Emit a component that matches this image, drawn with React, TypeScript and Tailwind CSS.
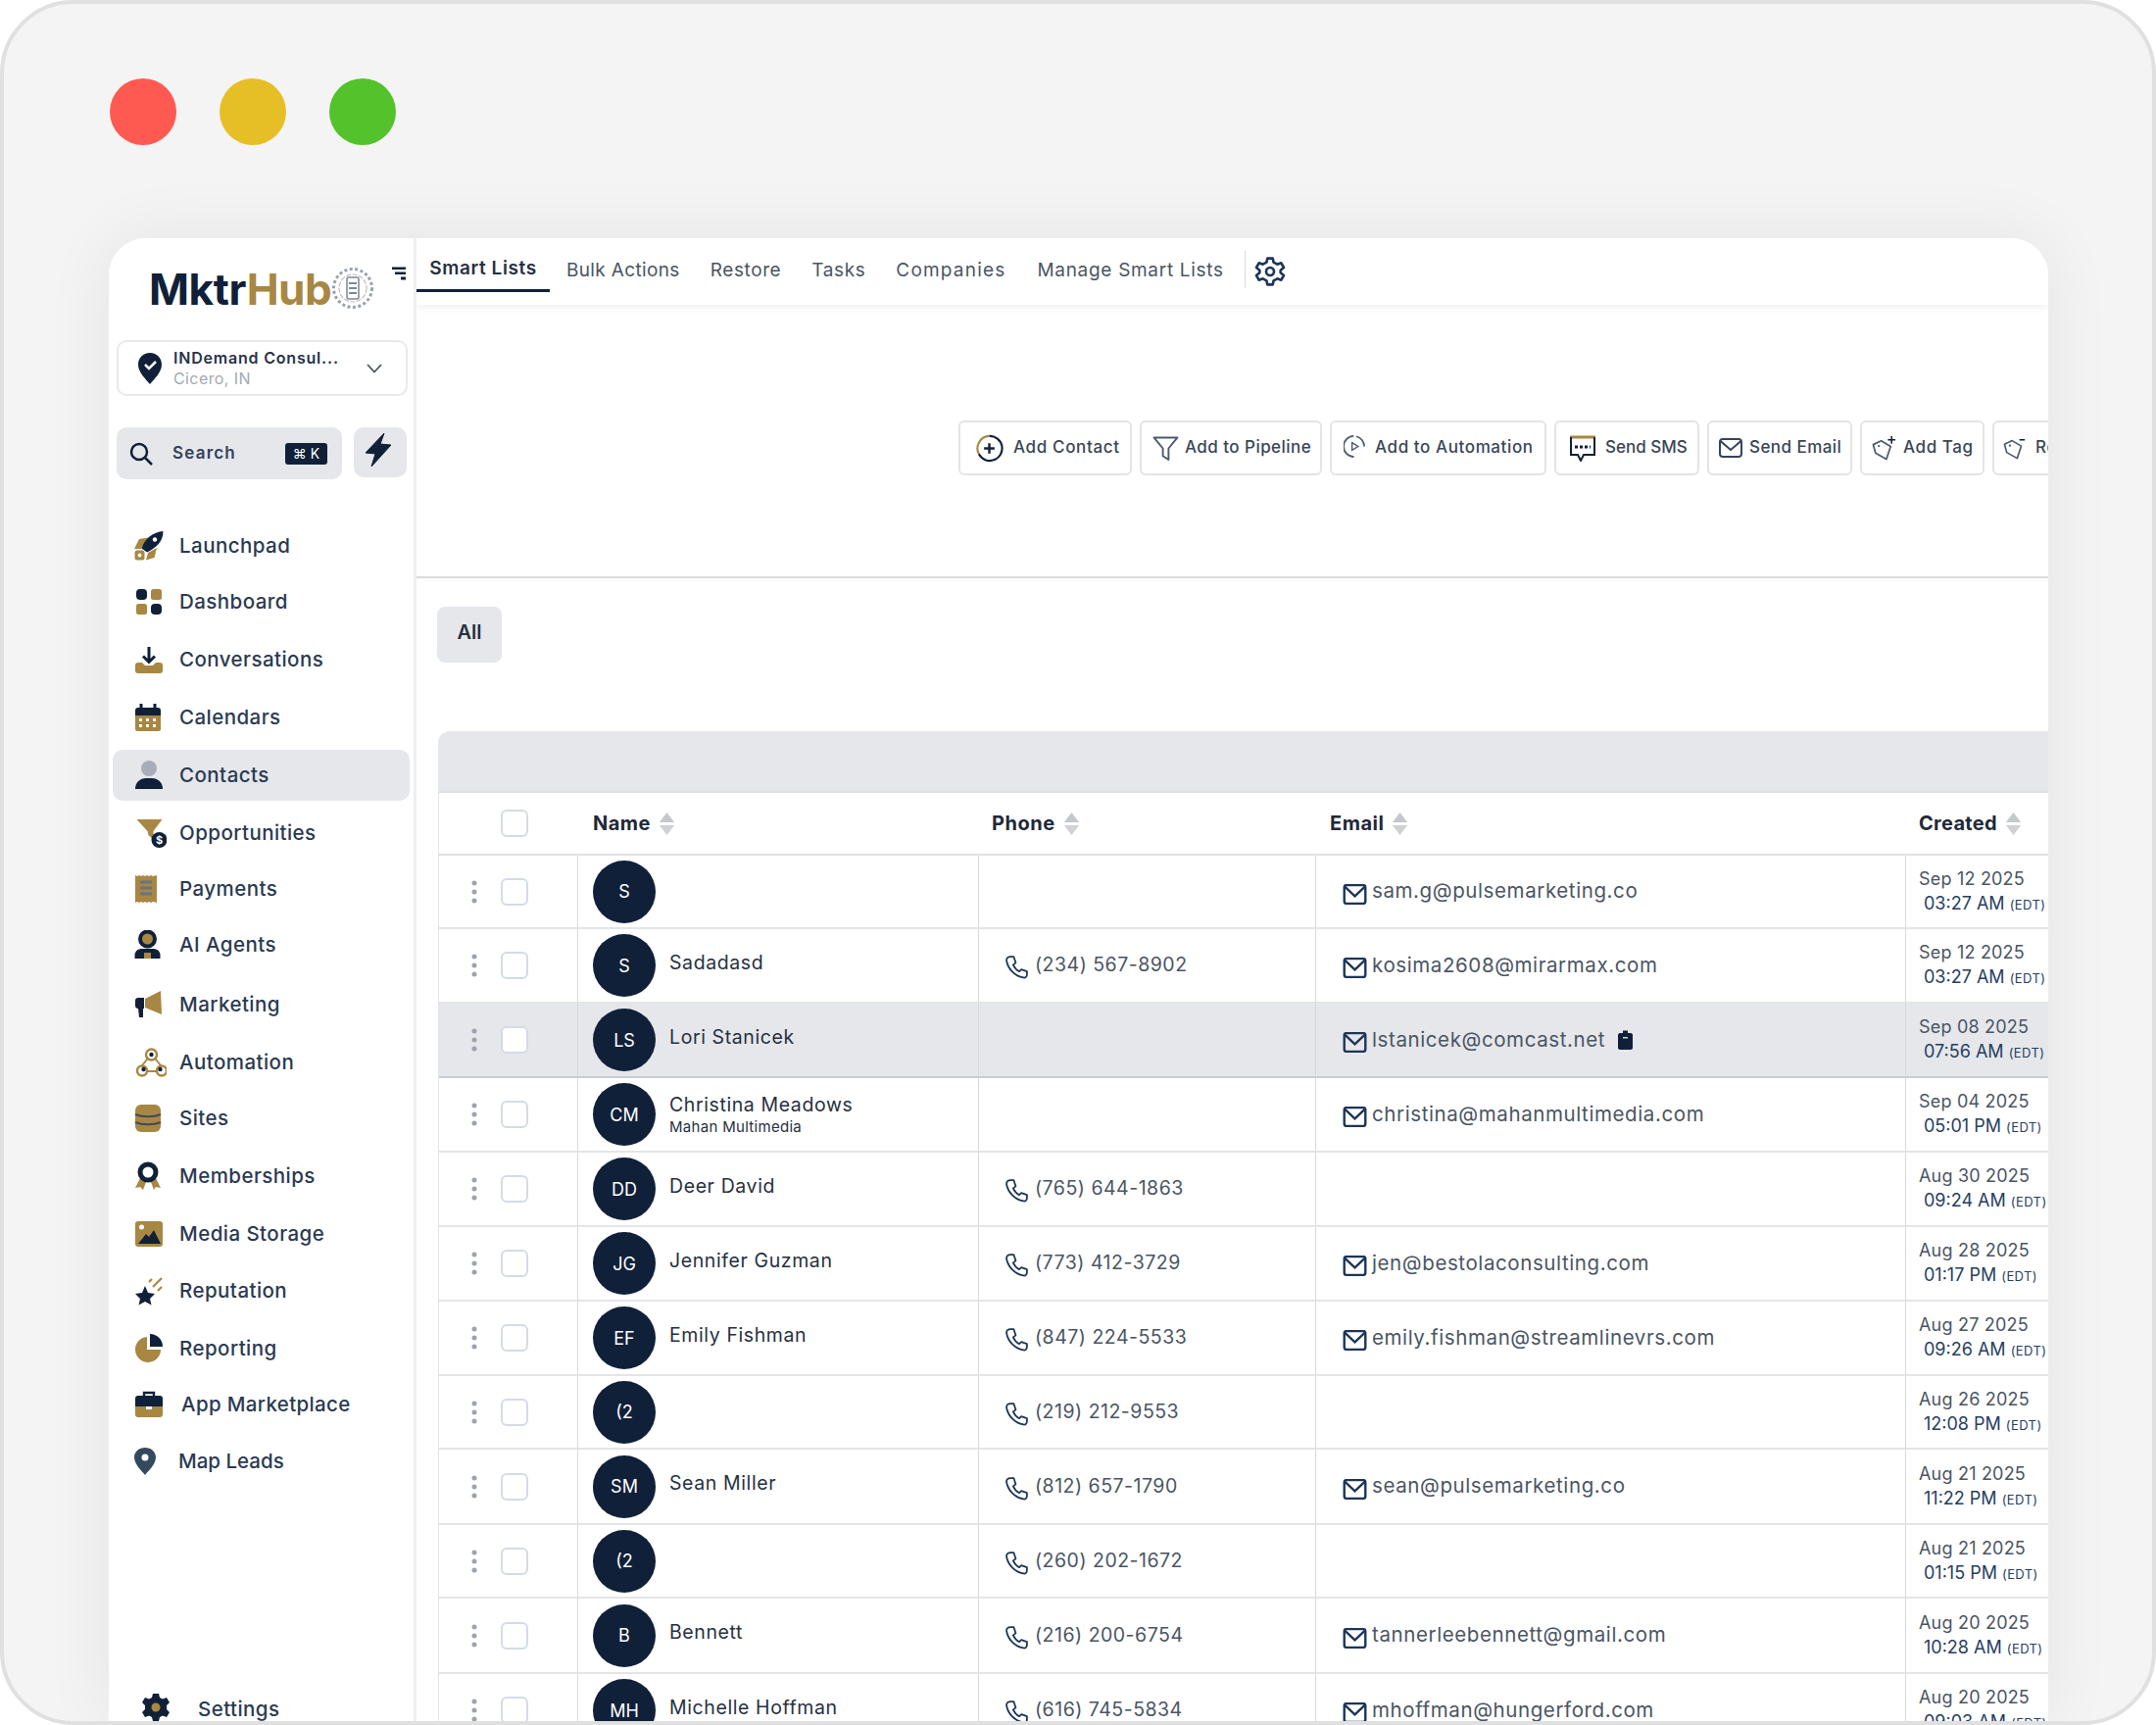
import { ReactNode } from 'react';

const NAVY = '#102039';
const GOLD = '#a88743';

function Svg({ children, className = 'w-[30px] h-[30px]' }: { children: ReactNode; className?: string }) {
  return (
    <svg viewBox="0 0 30 30" fill="none" className={`${className} shrink-0`}>
      {children}
    </svg>
  );
}

// sidebar icons, two tone
const icons: Record<string, ReactNode> = {
  rocket: (
    <Svg>
      <path d="M0 18 L5 8 L14 6.500 L7 18Z" fill={GOLD} />
      <path d="M14 22 L23 17 L20.500 27 L12 29.500Z" fill={GOLD} />
      <rect x="0.500" y="19.500" width="10" height="10" rx="2.500" fill={GOLD} />
      <circle cx="5.500" cy="24.500" r="1.900" fill="#fff" />
      <path d="M7.500 17.500 C11 7 19 1 29.500 0 C29.500 9.500 23.500 16.500 13 21.500Z" fill={NAVY} />
      <circle cx="21" cy="8.500" r="2.200" fill="#fff" />
    </Svg>
  ),
  dashboard: (
    <Svg>
      <rect x="2" y="2" width="11" height="11" rx="4" fill={NAVY} />
      <rect x="17" y="2" width="11" height="11" rx="2.500" fill={GOLD} />
      <rect x="2" y="17" width="11" height="11" rx="2.500" fill={GOLD} />
      <rect x="17" y="17" width="11" height="11" rx="4" fill={NAVY} />
    </Svg>
  ),
  inbox: (
    <Svg>
      <path d="M1 21 C1 19 2 18 4 18 L8 18 L11 21 L19 21 L22 18 L26 18 C28 18 29 19 29 21 L29 26 C29 28 28 29 26 29 L4 29 C2 29 1 28 1 26Z" fill={GOLD} />
      <path d="M15 2 L15 17 M9 11.500 L15 17.500 L21 11.500" stroke={NAVY} strokeWidth="3" />
    </Svg>
  ),
  calendar: (
    <Svg>
      <rect x="1" y="8" width="26" height="21" rx="2" fill={GOLD} />
      <path d="M1 13 L1 8 C1 6 2 5 4 5 L24 5 C26 5 27 6 27 8 L27 13Z" fill={NAVY} />
      <path d="M7 1 L7 7 M21 1 L21 7" stroke={NAVY} strokeWidth="3" />
      <g fill="#fff">
        <rect x="5" y="16" width="3" height="3" />
        <rect x="12" y="16" width="3" height="3" />
        <rect x="19" y="16" width="3" height="3" />
        <rect x="5" y="22" width="3" height="3" />
        <rect x="12" y="22" width="3" height="3" />
        <rect x="19" y="22" width="3" height="3" />
      </g>
    </Svg>
  ),
  person: (
    <Svg>
      <circle cx="15" cy="8" r="8" fill="#a8aeb9" />
      <path d="M1 29 C1 22 6 18 12 18 L18 18 C24 18 29 22 29 29Z" fill={NAVY} />
    </Svg>
  ),
  funnel: (
    <Svg className="w-[33px] h-[30px]">
      <path d="M1 1 L27 1 L18 13 L18 22 L13 17 L12 13Z" fill={GOLD} />
      <circle cx="24" cy="22" r="8" fill={NAVY} />
      <text x="24" y="26" textAnchor="middle" fontSize="11" fontWeight="700" fill="#fff">$</text>
    </Svg>
  ),
  receipt: (
    <Svg>
      <path d="M1 1 L3 2 L5 1 L7 2 L9 1 L11 2 L13 1 L15 2 L17 1 L19 2 L23 1 L23 29 L19 28 L17 29 L15 28 L13 29 L11 28 L9 29 L7 28 L5 29 L3 28 L1 29Z" fill={GOLD} />
      <path d="M6 8 L18 8 M6 14 L18 14 M6 20 L18 20" stroke="#6b7280" strokeWidth="3.200" />
    </Svg>
  ),
  agent: (
    <Svg>
      <circle cx="13.500" cy="9" r="7.500" stroke={NAVY} strokeWidth="4" fill={GOLD} />
      <path d="M0.500 29 L0.500 25 C1 21 4 19 8 19 L19 19 C23 19 26 21 26.500 25 L26.500 29Z" fill={NAVY} />
      <rect x="10" y="23" width="7" height="6" fill={GOLD} />
    </Svg>
  ),
  megaphone: (
    <Svg>
      <path d="M11 9 L27 1 L28 25 L11 18Z" fill={GOLD} />
      <path d="M1 11 C1 9 2 8 4 8 L10 8 L10 19 L9 19 L9 28 L5 28 L4 19 C2 19 1 18 1 16Z" fill={NAVY} />
    </Svg>
  ),
  automation: (
    <Svg className="w-[33px] h-[30px]">
      <path d="M13 10 L5 20 M19 10 L27 20 M9 24 L23 24" stroke={GOLD} strokeWidth="2" />
      <circle cx="16" cy="7" r="5.500" stroke={GOLD} strokeWidth="2.400" fill="#fff" />
      <circle cx="6.500" cy="23.500" r="5" stroke={GOLD} strokeWidth="2.400" fill="#fff" />
      <circle cx="26.500" cy="23.500" r="5" stroke={GOLD} strokeWidth="2.400" fill="#fff" />
      <circle cx="16" cy="7" r="2.200" fill={NAVY} />
      <circle cx="8" cy="22" r="2.200" fill={NAVY} />
      <circle cx="25" cy="22" r="2.200" fill={NAVY} />
    </Svg>
  ),
  database: (
    <Svg>
      <rect x="1" y="1" width="26" height="28" rx="6" fill={GOLD} />
      <path d="M1 11 C8 14 20 14 27 11 M1 19 C8 22 20 22 27 19" stroke="#3f4a5c" strokeWidth="2" />
    </Svg>
  ),
  badge: (
    <Svg>
      <path d="M6 17 L1 27 L6 26 L9 29 L12 21Z M17 21 L20 29 L22 26 L27 27 L22 17Z" fill={GOLD} />
      <circle cx="14" cy="11" r="8" stroke={NAVY} strokeWidth="5" fill="#fff" />
    </Svg>
  ),
  media: (
    <Svg>
      <rect x="1" y="2" width="28" height="26" rx="3" fill={GOLD} />
      <circle cx="7.500" cy="8" r="2.500" fill="#fff" />
      <path d="M4 25 L12 15 L15 18 L20 11 L27 25Z" fill={NAVY} />
    </Svg>
  ),
  star: (
    <Svg>
      <path d="M11 10 L14 17 L21 18 L16 23 L17.500 29.500 L11 26 L4.500 29.500 L6 23 L1 18 L8 17Z" fill={NAVY} />
      <path d="M19 11 L28 2 M15 6 L18 3 M24 15 L28 11" stroke={GOLD} strokeWidth="2.200" />
    </Svg>
  ),
  pie: (
    <Svg>
      <path d="M13 3 A13 13 0 1 0 27 16 L13 16Z" fill={GOLD} />
      <path d="M16 0 A13 13 0 0 1 29 13 L16 13Z" fill={NAVY} />
    </Svg>
  ),
  briefcase: (
    <Svg>
      <path d="M10 7 L10 3 L20 3 L20 7" stroke={NAVY} strokeWidth="2.400" />
      <path d="M1 9 C1 7 2 6 4 6 L26 6 C28 6 29 7 29 9 L29 17 L1 17Z" fill={NAVY} />
      <path d="M1 17 L12 17 L12 20 L18 20 L18 17 L29 17 L29 25 C29 27 28 28 26 28 L4 28 C2 28 1 27 1 25Z" fill={GOLD} />
    </Svg>
  ),
  mapPin: (
    <Svg>
      <path d="M11 1 C17 1 22 5 22 11 C22 18 14 25 11 29 C8 25 0 18 0 11 C0 5 5 1 11 1Z" fill="#34495e" />
      <circle cx="11" cy="11" r="3.500" fill="#fff" />
    </Svg>
  ),
};

const navItems = [
  { label: 'Launchpad', icon: 'rocket', cls: 'mt-[42px]' },
  { label: 'Dashboard', icon: 'dashboard', cls: 'mt-[5px]' },
  { label: 'Conversations', icon: 'inbox', cls: 'mt-[7px]' },
  { label: 'Calendars', icon: 'calendar', cls: 'mt-[7px]' },
  { label: 'Contacts', icon: 'person', cls: 'mt-[7px] bg-[#e5e7eb] rounded-[10px]' },
  { label: 'Opportunities', icon: 'funnel', cls: 'mt-[7px]' },
  { label: 'Payments', icon: 'receipt', cls: 'mt-[5px]' },
  { label: 'AI Agents', icon: 'agent', cls: 'mt-[5px]' },
  { label: 'Marketing', icon: 'megaphone', cls: 'mt-[9px]' },
  { label: 'Automation', icon: 'automation', cls: 'mt-[7px]' },
  { label: 'Sites', icon: 'database', cls: 'mt-[5px]' },
  { label: 'Memberships', icon: 'badge', cls: 'mt-[7px]' },
  { label: 'Media Storage', icon: 'media', cls: 'mt-[7px]' },
  { label: 'Reputation', icon: 'star', cls: 'mt-[6px]' },
  { label: 'Reporting', icon: 'pie', cls: 'mt-[7px]' },
  { label: 'App Marketplace', icon: 'briefcase', cls: 'mt-[5px]', text: 'ml-[2px] tracking-[0.35px]' },
  { label: 'Map Leads', icon: 'mapPin', cls: 'mt-[6px]', text: '-ml-[1px] tracking-[0px]' },
];

function Logo() {
  return (
    <div className="flex pl-[41px] pt-[30px] h-[104px] items-start relative">
      <div className="text-[44px] leading-[44px] font-bold tracking-[-0.4px] w-[186px] whitespace-nowrap">
        <span className="text-[#102039]">Mktr</span>
        <span className="text-[#a88743]">Hub</span>
      </div>
      <svg viewBox="0 0 44 44" fill="none" className="w-[44px] h-[44px] shrink-0 -mt-[1px]">
        <circle cx="22" cy="22" r="19.500" stroke="#9aa1ac" strokeWidth="3" strokeDasharray="3 2.500" />
        <circle cx="22" cy="22" r="14" stroke="#b9bec6" strokeWidth="1.200" strokeDasharray="5 1.500" />
        <rect x="16" y="11" width="12" height="22" rx="2" stroke="#7e8794" strokeWidth="1.500" />
        <path d="M18 17 L26 17 M18 22 L26 22 M18 27 L26 27" stroke="#7e8794" strokeWidth="2" />
      </svg>
      <svg viewBox="0 0 14 14" className="absolute left-[289px] top-[29px] w-[14px] h-[14px]">
        <path d="M0 0.500 L14 0.500 L14 3 L0 3Z M3 5.500 L14 5.500 L14 8 L3 8Z M9 10.500 L14 10.500 L14 13.500 L9 13.500Z" fill={NAVY} />
      </svg>
    </div>
  );
}

function Sidebar() {
  return (
    <aside className="w-[314px] shrink-0 flex flex-col border-r-[3px] border-[#efefef] bg-white">
      <Logo />
      <div className="mx-[8px] w-[297px] h-[57px] border-2 border-[#e8e9eb] rounded-[10px] flex items-center pl-[20px]">
        <svg viewBox="0 0 24 32" className="w-[24px] h-[32px] shrink-0">
          <path d="M12 0 C19 0 24 5 24 12 C24 20 16 27 12 32 C8 27 0 20 0 12 C0 5 5 0 12 0Z" fill={NAVY} />
          <path d="M7 12 L11 16 L18 9" stroke="#fff" strokeWidth="2.500" fill="none" />
        </svg>
        <div className="ml-[12px] w-[185px] leading-[21px]">
          <div className="text-[16px] font-semibold text-[#27334a] tracking-[0.8px] whitespace-nowrap">INDemand Consul...</div>
          <div className="text-[16px] text-[#a4a9b2] tracking-[0.4px]">Cicero, IN</div>
        </div>
        <svg viewBox="0 0 16 10" className="w-[16px] h-[10px] ml-[12px]" fill="none">
          <path d="M1 1 L8 8.500 L15 1" stroke="#4b5563" strokeWidth="1.800" />
        </svg>
      </div>
      <div className="mt-[32px] ml-[8px] flex gap-[12px] h-[53px]">
        <div className="w-[230px] bg-[#e5e7eb] rounded-[10px] flex items-center pl-[13px]">
          <svg viewBox="0 0 24 24" className="w-[24px] h-[24px] shrink-0" fill="none">
            <circle cx="10" cy="10" r="8" stroke={NAVY} strokeWidth="2.500" />
            <path d="M16 16 L23 23" stroke={NAVY} strokeWidth="2.500" />
          </svg>
          <span className="ml-[20px] w-[65px] text-[17px] font-semibold text-[#33415a] tracking-[1.2px]">Search</span>
          <span className="ml-[50px] w-[43px] h-[22px] bg-[#102039] rounded-[3px] text-white text-[14px] leading-[22px] text-center">⌘ K</span>
        </div>
        <div className="w-[54px] h-[51px] bg-[#e5e7eb] rounded-[10px] flex items-center justify-center pr-[4px] pb-[5px]">
          <svg viewBox="0 0 26 34" className="w-[26px] h-[34px]">
            <path d="M19 0 L0 20 L10 21 L6 34 L26 12 L15 11Z" fill={NAVY} stroke={NAVY} strokeLinejoin="round" />
          </svg>
        </div>
      </div>
      <nav className="flex flex-col ml-[4px] w-[303px]">
        {navItems.map((item) => (
          <a key={item.label} className={`h-[52px] flex items-center pl-[22px] ${item.cls}`}>
            <span className="w-[46px] shrink-0 flex items-center">{icons[item.icon]}</span>
            <span className={`pt-[1px] text-[20.500px] font-medium text-[#2b3a52] whitespace-nowrap ${item.text ?? 'tracking-[0.45px]'}`}>{item.label}</span>
          </a>
        ))}
      </nav>
      <div className="mt-auto flex items-center ml-[34px] h-[28px]">
        <svg viewBox="0 0 28 28" className="w-[28px] h-[28px] shrink-0">
          <path
            d="M11 0 L17 0 L18 4 L21 5.500 L25 4 L28 9 L25 12 L25 16 L28 19 L25 24 L21 22.500 L18 24 L17 28 L11 28 L10 24 L7 22.500 L3 24 L0 19 L3 16 L3 12 L0 9 L3 4 L7 5.500 L10 4Z"
            fill={NAVY}
          />
          <circle cx="14" cy="14" r="4.500" fill={GOLD} />
        </svg>
        <span className="ml-[29px] pt-[4px] text-[20.500px] font-medium text-[#2b3a52] tracking-[0.45px]">Settings</span>
      </div>
    </aside>
  );
}

const tabs = [
  { label: 'Bulk Actions', cls: 'ml-[17px] tracking-[0.35px]' },
  { label: 'Restore', cls: 'ml-[31px] tracking-[0.6px]' },
  { label: 'Tasks', cls: 'ml-[31px] tracking-[0.6px]' },
  { label: 'Companies', cls: 'ml-[31px] tracking-[1.2px]' },
  { label: 'Manage Smart Lists', cls: 'ml-[32px] tracking-[0.7px]' },
];

function TopBar() {
  return (
    <div className="h-[68px] shrink-0 flex items-start bg-white relative shadow-[0_3px_8px_rgba(0,0,0,0.06)]">
      <div className="w-[136px] h-[55px] border-b-[3px] border-[#102039] flex items-center justify-center pt-[11px] text-[19px] font-semibold text-[#27303f] tracking-[0.6px]">
        Smart Lists
      </div>
      {tabs.map((t) => (
        <div key={t.label} className={`h-[55px] flex items-center pt-[11px] text-[19px] text-[#4b5563] whitespace-nowrap ${t.cls}`}>
          {t.label}
        </div>
      ))}
      <div className="ml-[21px] mt-[13px] w-px h-[38px] bg-[#d9d9d9]" />
      <svg viewBox="0 0 24 24" fill="none" stroke="#1d3557" strokeWidth="2" className="ml-[9px] mt-[18px] w-[32px] h-[32px] shrink-0">
        <path d="M10 2 L14 2 L14.700 5 L17.500 6.500 L20.500 5.500 L22.500 9 L20 11 L20 13 L22.500 15 L20.500 18.500 L17.500 17.500 L14.700 19 L14 22 L10 22 L9.300 19 L6.500 17.500 L3.500 18.500 L1.500 15 L4 13 L4 11 L1.500 9 L3.500 5.500 L6.500 6.500 L9.300 5Z" strokeLinejoin="round" />
        <circle cx="12" cy="12" r="3" />
      </svg>
    </div>
  );
}

const actionIcons: Record<string, ReactNode> = {
  contact: (
    <svg viewBox="0 0 30 30" fill="none" className="w-[29px] h-[29px] shrink-0" strokeWidth="2.200">
      <path d="M15 2 A13 13 0 0 0 4 21" stroke={GOLD} />
      <path d="M15 2 A13 13 0 1 1 4 21" stroke={NAVY} />
      <path d="M15 9.500 L15 20.500 M9.500 15 L20.500 15" stroke={NAVY} strokeWidth="2.500" />
    </svg>
  ),
  pipeline: (
    <svg viewBox="0 0 28 26" fill="none" className="w-[27px] h-[25px] shrink-0">
      <path d="M1.500 1.500 L26.500 1.500 L17 13 L17 25 L11 21 L11 13Z" stroke="#4b5a6e" strokeWidth="2" strokeLinejoin="round" />
    </svg>
  ),
  automation: (
    <svg viewBox="0 0 24 24" fill="none" className="w-[23px] h-[23px] shrink-0 -mt-[4px]">
      <path d="M11 23 A11 11 0 1 1 22 12" stroke="#4b5a6e" strokeWidth="1.800" strokeDasharray="34 3" />
      <path d="M9 8 L15.500 12 L9 16Z" stroke="#4b5a6e" strokeWidth="1.500" />
    </svg>
  ),
  sms: (
    <svg viewBox="0 0 28 28" fill="none" className="w-[28px] h-[28px] shrink-0">
      <path d="M1 3 L27 3" stroke={GOLD} strokeWidth="3" />
      <path d="M2 3 L2 21 L9 21 L12 27 L15 21 L26 21 L26 3" stroke={NAVY} strokeWidth="2" />
      <path d="M6 13 L22 13" stroke={NAVY} strokeWidth="3" strokeDasharray="3 2" />
    </svg>
  ),
  email: (
    <svg viewBox="0 0 24 20" fill="none" className="w-[24px] h-[20px] shrink-0">
      <rect x="1" y="1" width="22" height="18" rx="3" stroke="#34445c" strokeWidth="2" />
      <path d="M1.500 3 L12 12 L22.500 3" stroke="#34445c" strokeWidth="2" />
    </svg>
  ),
  tag: (
    <svg viewBox="0 0 26 26" fill="none" className="w-[25px] h-[25px] shrink-0">
      <path d="M1.500 9 L10 5 L20 11 L15.500 24.500 L4 18Z" stroke="#4b5a6e" strokeWidth="1.800" strokeLinejoin="round" />
      <circle cx="7.500" cy="10.500" r="1.200" fill="#4b5a6e" />
      <path d="M21 0 L21 8 M17 4 L25 4" stroke={NAVY} strokeWidth="1.600" />
    </svg>
  ),
  remove: (
    <svg viewBox="0 0 26 26" fill="none" className="w-[24px] h-[24px] shrink-0">
      <path d="M1.500 9 L10 5 L20 11 L15.500 24.500 L4 18Z" stroke="#4b5a6e" strokeWidth="1.800" strokeLinejoin="round" />
      <circle cx="7.500" cy="10.500" r="1.200" fill="#4b5a6e" />
      <path d="M18 4 L24 4" stroke={NAVY} strokeWidth="1.600" />
    </svg>
  ),
};

const actions = [
  { label: 'Add Contact', icon: 'contact', cls: 'w-[177px] pl-[15px] gap-[10px] tracking-[0.65px]' },
  { label: 'Add to Pipeline', icon: 'pipeline', cls: 'w-[186px] pl-[11px] gap-[6px] tracking-[0.45px]' },
  { label: 'Add to Automation', icon: 'automation', cls: 'w-[221px] pl-[12px] gap-[9px] tracking-[0.6px]' },
  { label: 'Send SMS', icon: 'sms', cls: 'w-[148px] pl-[13px] gap-[9px]' },
  { label: 'Send Email', icon: 'email', cls: 'w-[148px] pl-[10px] gap-[7px] tracking-[0.45px]' },
  { label: 'Add Tag', icon: 'tag', cls: 'w-[127px] pl-[10px] gap-[7px] tracking-[0.6px]' },
  { label: 'Remove Tag', icon: 'remove', cls: 'w-[126px] pl-[9px] gap-[9px] tracking-[0.6px]' },
];

function SortArrows() {
  return (
    <svg viewBox="0 0 16 24" className="w-[17px] h-[23px] shrink-0">
      <path d="M8 0 L16 10.500 L0 10.500Z" fill="#c4c7cc" />
      <path d="M0 13.500 L16 13.500 L8 24Z" fill="#cfd1d4" />
    </svg>
  );
}

function Checkbox({ on }: { on?: boolean }) {
  return <div className={`w-[28px] h-[28px] shrink-0 rounded-[6px] border-2 border-[#d5dbe5] ${on ? 'bg-white' : ''}`} />;
}

function PhoneIcon() {
  return (
    <svg viewBox="0 0 24 24" fill="none" className="w-[25px] h-[25px] shrink-0 mt-[3px]" stroke="#1d3557" strokeWidth="1.700">
      <path d="M6 2 L9 2 L11 8 L8.500 10 C10 13.500 11.500 15 14.500 16.500 L16.500 14.500 L22 16.500 L22 19.500 C22 21.500 20.500 23 18.500 22.500 C10 21 3.500 14 2 6 C1.700 3.500 3.500 2 6 2Z" strokeLinejoin="round" />
    </svg>
  );
}

function MailIcon() {
  return (
    <svg viewBox="0 0 25 22" fill="none" className="w-[25px] h-[21px] shrink-0 mt-[5px]">
      <rect x="1.200" y="1.200" width="22.600" height="19.600" rx="2.500" stroke="#1d3557" strokeWidth="2.500" />
      <path d="M2 3 L12.500 13 L23 3" stroke="#1d3557" strokeWidth="2.500" />
    </svg>
  );
}

const rows = [
  { init: 'S', name: '', phone: '', email: 'sam.g@pulsemarketing.co', date: 'Sep 12 2025', time: '03:27 AM', h: 'h-[75px]' },
  { init: 'S', name: 'Sadadasd', phone: '(234) 567-8902', email: 'kosima2608@mirarmax.com', date: 'Sep 12 2025', time: '03:27 AM', h: 'h-[76px]' },
  { init: 'LS', name: 'Lori Stanicek', phone: '', email: 'lstanicek@comcast.net', date: 'Sep 08 2025', time: '07:56 AM', h: 'h-[76px]', active: true },
  { init: 'CM', name: 'Christina Meadows', sub: 'Mahan Multimedia', phone: '', email: 'christina@mahanmultimedia.com', date: 'Sep 04 2025', time: '05:01 PM', h: 'h-[76px]' },
  { init: 'DD', name: 'Deer David', phone: '(765) 644-1863', email: '', date: 'Aug 30 2025', time: '09:24 AM', h: 'h-[76px]' },
  { init: 'JG', name: 'Jennifer Guzman', phone: '(773) 412-3729', email: 'jen@bestolaconsulting.com', date: 'Aug 28 2025', time: '01:17 PM', h: 'h-[76px]' },
  { init: 'EF', name: 'Emily Fishman', phone: '(847) 224-5533', email: 'emily.fishman@streamlinevrs.com', date: 'Aug 27 2025', time: '09:26 AM', h: 'h-[76px]' },
  { init: '(2', name: '', phone: '(219) 212-9553', email: '', date: 'Aug 26 2025', time: '12:08 PM', h: 'h-[75px]' },
  { init: 'SM', name: 'Sean Miller', phone: '(812) 657-1790', email: 'sean@pulsemarketing.co', date: 'Aug 21 2025', time: '11:22 PM', h: 'h-[77px]' },
  { init: '(2', name: '', phone: '(260) 202-1672', email: '', date: 'Aug 21 2025', time: '01:15 PM', h: 'h-[75px]' },
  { init: 'B', name: 'Bennett', phone: '(216) 200-6754', email: 'tannerleebennett@gmail.com', date: 'Aug 20 2025', time: '10:28 AM', h: 'h-[77px]' },
  { init: 'MH', name: 'Michelle Hoffman', phone: '(616) 745-5834', email: 'mhoffman@hungerford.com', date: 'Aug 20 2025', time: '09:03 AM', h: 'h-[76px]' },
];

function ContactsTable() {
  const cell = 'border-b-2 border-r p-0 align-middle border-r-[#d9d9d9]';
  return (
    <div className="ml-[22px] mt-[70px] w-[1718px] shrink-0">
      <div className="h-[61px] bg-[#e5e7eb] rounded-tl-[12px]" />
      <table className="w-[1718px] table-fixed border-separate border-spacing-0 border-l border-[#e5e5e5]">
        <colgroup>
          <col className="w-[142px]" />
          <col className="w-[409px]" />
          <col className="w-[344px]" />
          <col className="w-[602px]" />
          <col className="w-[221px]" />
        </colgroup>
        <thead>
          <tr className="h-[66px] text-[20px] font-semibold text-[#1f2937]">
            <th className="border-y-2 border-y-[#dfe0e2] p-0 text-left">
              <div className="ml-[63px]">
                <Checkbox />
              </div>
            </th>
            <th className="border-y-2 border-y-[#dfe0e2] p-0 pl-[15px] text-left">
              <div className="flex items-center gap-[8px] tracking-[0.5px]">Name <SortArrows /></div>
            </th>
            <th className="border-y-2 border-y-[#dfe0e2] p-0 pl-[13px] text-left">
              <div className="flex items-center gap-[8px] tracking-[0.5px]">Phone <SortArrows /></div>
            </th>
            <th className="border-y-2 border-y-[#dfe0e2] p-0 pl-[14px] text-left">
              <div className="flex items-center gap-[8px] tracking-[0.5px]">Email <SortArrows /></div>
            </th>
            <th className="border-y-2 border-y-[#dfe0e2] p-0 pl-[13px] text-left">
              <div className="flex items-center gap-[8px] tracking-[0.3px]">Created <SortArrows /></div>
            </th>
          </tr>
        </thead>
        <tbody>
          {rows.map((r, i) => {
            const line = r.active ? 'border-b-[#c9ccd2]' : 'border-b-[#e5e5e5]';
            return (
              <tr key={i} className={`${r.h} ${r.active ? 'bg-[#e5e7eb]' : ''}`}>
                <td className={`${cell} ${line}`}>
                  <div className="flex items-center pl-[33px] gap-[24px]">
                    <svg viewBox="0 0 6 24" className="w-[6px] h-[24px] shrink-0">
                      <circle cx="3" cy="3" r="2.500" fill="#9ca3af" />
                      <circle cx="3" cy="12" r="2.500" fill="#9ca3af" />
                      <circle cx="3" cy="21" r="2.500" fill="#9ca3af" />
                    </svg>
                    <Checkbox on={r.active} />
                  </div>
                </td>
                <td className={`${cell} ${line}`}>
                  <div className="flex items-center pl-[15px] gap-[14px]">
                    <div className="w-[64px] h-[64px] shrink-0 rounded-full bg-[#102039] text-white text-[18px] flex items-center justify-center">
                      {r.init}
                    </div>
                    <div className={r.sub ? 'pb-[3px]' : 'pb-[6px]'}>
                      <div className="text-[19.500px] leading-[27px] text-[#27303f] tracking-[0.6px]">{r.name}</div>
                      {r.sub && <div className="text-[15px] leading-[17px] text-[#27303f] tracking-[0.3px]">{r.sub}</div>}
                    </div>
                  </div>
                </td>
                <td className={`${cell} ${line}`}>
                  {r.phone && (
                    <div className="flex items-center pl-[26px] gap-[6px] text-[19.500px] text-[#4b5563] tracking-[0.5px]">
                      <PhoneIcon />
                      {r.phone}
                    </div>
                  )}
                </td>
                <td className={`${cell} ${line}`}>
                  {r.email && (
                    <div className="flex items-center pl-[27px] gap-[5px] text-[20.500px] text-[#4b5563] tracking-[0.6px]">
                      <MailIcon />
                      {r.email}
                      {r.active && (
                        <svg viewBox="0 0 15 20" className="w-[15px] h-[20px] ml-[8px] shrink-0">
                          <path d="M5 3 L5 0.500 L10 0.500 L10 3 L13 3 C14 3 15 4 15 5 L15 18 C15 19 14 20 13 20 L2 20 C1 20 0 19 0 18 L0 5 C0 4 1 3 2 3Z" fill={NAVY} />
                          <rect x="5" y="7" width="5" height="1.500" fill="#cfd3da" />
                        </svg>
                      )}
                    </div>
                  )}
                </td>
                <td className={`border-b-2 p-0 align-middle ${line}`}>
                  <div className="pl-[13px] text-[18px] leading-[25px] text-[#4b5563] whitespace-nowrap tracking-[0.2px]">
                    <div>{r.date}</div>
                    <div className="pl-[5px] text-[#27405f] tracking-[0px]">
                      {r.time} <span className="text-[13px] tracking-[0.4px]">(EDT)</span>
                    </div>
                  </div>
                </td>
              </tr>
            );
          })}
        </tbody>
      </table>
    </div>
  );
}

function Main() {
  return (
    <main className="flex-1 min-w-0 flex flex-col bg-white overflow-hidden">
      <TopBar />
      <div className="h-[279px] shrink-0 border-b-2 border-[#dcdcdc] pt-[118px] pl-[553px] flex gap-[8px] items-start">
        {actions.map((a) => (
          <button key={a.label} className={`h-[56px] shrink-0 flex items-center border-2 border-[#e3e4e6] rounded-[6px] text-[17px] font-medium text-[#3a4656] whitespace-nowrap ${a.cls}`}>
            {actionIcons[a.icon]}
            {a.label}
          </button>
        ))}
      </div>
      <div className="ml-[21px] mt-[29px] w-[66px] h-[57px] shrink-0 bg-[#e5e7eb] rounded-[8px] flex items-center justify-center pb-[6px] text-[20px] font-semibold text-[#27303f]">
        All
      </div>
      <ContactsTable />
    </main>
  );
}

export default function App() {
  return (
    <div className="w-[2200px] h-[1760px] bg-white [font-family:Inter,sans-serif]">
      <div className="w-full h-full rounded-[75px] border-4 border-[#e0e0e0] bg-[#f4f4f4] overflow-hidden flex flex-col pl-[107px] pr-[106px]">
        <div className="flex gap-[44px] pt-[76px] ml-[1px] shrink-0">
          <div className="w-[68px] h-[68px] rounded-full bg-[#ff5a52]" />
          <div className="w-[68px] h-[68px] rounded-full bg-[#e6bf27]" />
          <div className="w-[68px] h-[68px] rounded-full bg-[#53c22b]" />
        </div>
        <div className="mt-[95px] flex-1 min-h-0 flex rounded-t-[38px] overflow-hidden bg-white shadow-[0_0_70px_rgba(0,0,0,0.07)]">
          <Sidebar />
          <Main />
        </div>
      </div>
    </div>
  );
}
